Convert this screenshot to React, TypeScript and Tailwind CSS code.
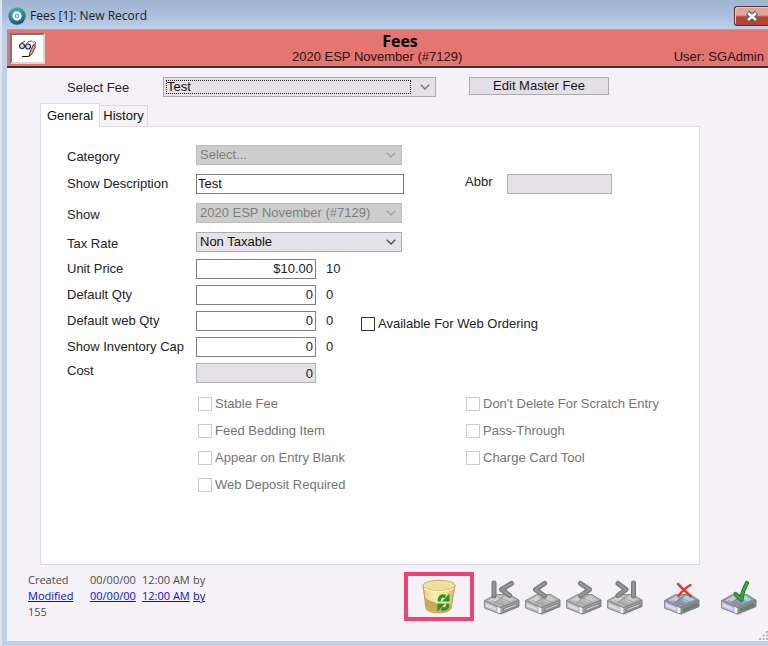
import type { ReactNode } from "react";

const sans = "font-['Liberation_Sans',Arial,sans-serif]";
const humanist = "font-['Open_Sans','Noto_Sans',sans-serif]";

function Chevron() {
  return (
    <svg
      viewBox="0 0 10 6"
      className="pointer-events-none absolute top-1/2 right-[6px] h-[6px] w-[10px] -translate-y-1/2"
      fill="none"
      stroke="currentColor"
      strokeWidth="1.5"
      aria-hidden="true"
    >
      <path d="M0.8 0.8 5 5 9.2 0.8" />
    </svg>
  );
}

function SelectBox({
  id,
  value,
  disabled = false,
  marked = false,
}: {
  id: string;
  value: string;
  disabled?: boolean;
  marked?: boolean;
}) {
  return (
    <div
      className={
        disabled
          ? "relative w-[206px] text-[#a3a3a3]"
          : marked
            ? "relative w-[273px] text-[#777]"
            : "relative w-[206px] text-[#555]"
      }
    >
      <select
        id={id}
        disabled={disabled}
        defaultValue={value}
        className={
          disabled
            ? "block h-5 w-full appearance-none border border-[#bdbdbd] bg-[#cdcdcd] pb-px pl-[3px] text-[13px] leading-4 text-[#7d7d7d] opacity-100 outline-none"
            : "block h-5 w-full appearance-none border border-[#acacb0] bg-[#e4e2e6] pb-px pl-[3px] text-[13px] leading-4 text-[#111] outline-none"
        }
      >
        <option>{value}</option>
      </select>
      {marked && (
        <span className="pointer-events-none absolute top-[3px] right-[25px] bottom-[3px] left-[3px] border border-dotted border-[#222]" />
      )}
      <Chevron />
    </div>
  );
}

function SelectRow({ id, label, value, disabled }: { id: string; label: string; value: string; disabled?: boolean }) {
  return (
    <div className="flex h-5 items-center">
      <label htmlFor={id} className="w-[129px] pt-[3px]">
        {label}
      </label>
      <SelectBox id={id} value={value} disabled={disabled} />
    </div>
  );
}

function NumberRow({
  id,
  label,
  value,
  raw,
  children,
}: {
  id: string;
  label: string;
  value: string;
  raw: string;
  children?: ReactNode;
}) {
  return (
    <div className="flex h-5 items-center">
      <label htmlFor={id} className="w-[129px]">
        {label}
      </label>
      <input
        id={id}
        defaultValue={value}
        className="h-5 w-[120px] border border-[#7f7f7f] bg-white pr-[2px] pb-px text-right outline-none"
      />
      <span className="w-[45px] pl-[10px]">{raw}</span>
      {children}
    </div>
  );
}

function Check({ label, enabled = false }: { label: string; enabled?: boolean }) {
  return (
    <label
      className={
        enabled
          ? "flex h-[14px] items-center gap-[3px] self-end whitespace-nowrap"
          : "flex h-[14px] items-center gap-[3px] whitespace-nowrap text-[#757575]"
      }
    >
      <input
        type="checkbox"
        disabled={!enabled}
        className={
          enabled
            ? "size-[14px] shrink-0 appearance-none border border-[#333] bg-white checked:bg-[#333]"
            : "size-[14px] shrink-0 appearance-none border border-[#ccc] bg-white"
        }
      />
      {label}
    </label>
  );
}

function Drive({ tinted = false, children }: { tinted?: boolean; children: ReactNode }) {
  return (
    <svg viewBox="0 0 36 36" className="size-9" fill="none" aria-hidden="true">
      <path d="M1 24 17 32 35 23v5L18 36 1 30Z" fill="#00000022" />
      <path d="M0.5 21.5 16 28.5V35L0.5 29Z" fill={tinted ? "#b9b9d6" : "#bcbcbc"} stroke="#7b7b7b" strokeWidth="0.8" />
      <path d="M2 24.5 12 29v2.500L2 27.500Z" fill={tinted ? "#dcdcf2" : "#dedede"} />
      <path d="M16 28.500 35 21v6.500L16 35Z" fill={tinted ? "#8b8d96" : "#9d9d9d"} stroke="#666" strokeWidth="0.8" />
      <path d="M13.500 27.500 16.500 28.700V34.600l-3-1.200Z" fill="#f4f4f6" />
      <path d="M19.500 29.800 33 24.500v2.200L19.500 32Z" fill={tinted ? "#4f9d51" : "#cfcfcf"} stroke="#6c6c6c" strokeWidth="0.7" />
      <path d="M0.500 21.500 11.500 15.500H26L35 21 16 28.500Z" fill={tinted ? "#9697ab" : "#b3b3b3"} stroke="#808080" strokeWidth="0.8" />
      <path d="M4.500 21.300 12.500 16.800H18L10 23.800Z" fill={tinted ? "#c9c9df" : "#d2d2d2"} />
      <path d="M19.500 16.800h5.500l5.500 4-7.500 2.500-5-2.300Z" fill={tinted ? "#9adbe8" : "#cacaca"} />
      <path d="M7 21.500 20 26M13 17.500 26 23M22 16.500 10 24" stroke={tinted ? "#777795" : "#8f8f8f"} strokeWidth="0.6" />
      {children}
    </svg>
  );
}

function Stroke({ d }: { d: string }) {
  return (
    <>
      <path d={d} stroke="#757575" strokeWidth="5" strokeLinecap="round" strokeLinejoin="round" />
      <path d={d} stroke="#8b8b8b" strokeWidth="3.400" strokeLinecap="round" strokeLinejoin="round" />
      <path d={d} stroke="#9b9b9b" strokeWidth="1.200" strokeLinecap="round" strokeLinejoin="round" />
    </>
  );
}

function Bin() {
  return (
    <svg viewBox="0 0 34 35" className="h-[35px] w-[34px]" fill="none" aria-hidden="true">
      <defs>
        <linearGradient id="binSide" x1="0" x2="1">
          <stop offset="0" stopColor="#e5cf7c" />
          <stop offset="0.35" stopColor="#f8edb8" />
          <stop offset="0.7" stopColor="#f0df98" />
          <stop offset="1" stopColor="#d8bd68" />
        </linearGradient>
      </defs>
      <path d="M1 6 4 29.500C6 35.300 27 35.300 29 29.500L33 6Z" fill="url(#binSide)" stroke="#b89e50" />
      <path d="M2.800 18.500C8 23 13 22 18 26c4 3 7 2 11.500-1.500l-.8 5C27 34.500 6.300 34.500 4.300 29Z" fill="#c9ab57" />
      <ellipse cx="17" cy="6.500" rx="16" ry="5.200" fill="#f3e3a0" stroke="#c8ae5b" />
      <ellipse cx="17" cy="7.200" rx="13.500" ry="3.800" fill="#f2df98" />
      <path d="M2.300 9C7 13.500 27 13.500 31.800 9" stroke="#fff4c5" strokeWidth="1.200" />
      <path d="M17.300 22.500C17 17.500 20 16 23.500 17.500" stroke="#22942a" strokeWidth="3.200" />
      <path d="M27.500 14.500v8h-7.500Z" fill="#22942a" />
      <path d="M25.700 24.500C26 29.500 23 31 19.500 29.500" stroke="#22942a" strokeWidth="3.200" />
      <path d="M15.500 32.500v-8h7.500Z" fill="#22942a" />
    </svg>
  );
}

function IconButton({ label, children }: { label: string; children: ReactNode }) {
  return (
    <button type="button" aria-label={label} className="block size-9">
      {children}
    </button>
  );
}

export default function App() {
  return (
    <div
      className={`flex min-h-screen flex-col border-l-2 border-[#dfe3ea] bg-[#bfd0ea] pb-[5px] pl-[5px] text-[13px] leading-4 text-[#22222a] ${sans}`}
    >
      <div className="-ml-[5px] flex h-[29px] items-center bg-linear-to-b from-[#9fb5d2] via-[#a9bedb] to-[#bdd0ec] pt-[3px] pl-[6px]">
        <svg viewBox="0 0 18 18" className="size-[18px]" fill="none" aria-hidden="true">
          <defs>
            <linearGradient id="appMark" x1="0" y1="0" x2="0.300" y2="1">
              <stop offset="0" stopColor="#4fb9ae" />
              <stop offset="1" stopColor="#1d5f7c" />
            </linearGradient>
          </defs>
          <circle cx="9" cy="9" r="8.700" fill="url(#appMark)" />
          <circle cx="9" cy="9" r="3.400" fill="#2f8d9a" stroke="#fff" strokeWidth="2.600" />
          <circle cx="9" cy="9" r="1.200" fill="#d8f0ef" />
        </svg>
        <h1 className={`ml-1 text-[12px] text-[#1c202a] ${humanist}`}>Fees [1]: New Record</h1>
        <button
          type="button"
          aria-label="Close"
          className="ml-auto flex h-5 w-[34px] items-center justify-center rounded-l-[3px] border border-r-0 border-[#553238] bg-linear-to-b from-[#dfa79c] from-45% to-[#b2452f] to-55% shadow-[inset_1px_1px_0_#efc9c2]"
        >
          <svg viewBox="0 0 14 11" className="h-[11px] w-[14px]" fill="none" aria-hidden="true">
            <path d="M2.500 1.500 11.500 9.500M11.500 1.500 2.500 9.500" stroke="#4e5262" strokeWidth="4.600" />
            <path d="M3 2 11 9M11 2 3 9" stroke="#fff" strokeWidth="2.600" />
          </svg>
        </button>
      </div>

      <header className="grid h-[39px] grid-cols-[1fr_190px_1fr] border-t border-b-2 border-t-[#cf8f98] border-b-[#4a2d30] bg-[#e57570] pr-1 pl-[3px] text-[#2a1214]">
        <button
          type="button"
          aria-label="Edit view"
          className="mt-[3px] flex h-[31px] w-[35px] items-center justify-center border-2 border-t-[#777] border-r-[#d8d8d8] border-b-[#d8d8d8] border-l-[#777] bg-white"
        >
          <svg viewBox="0 0 20 20" className="size-5" fill="none" aria-hidden="true">
            <circle cx="4" cy="7" r="2.500" fill="#d3dcf3" stroke="#222a4b" strokeWidth="1.200" />
            <circle cx="10" cy="7.500" r="2.500" fill="#d3dcf3" stroke="#222a4b" strokeWidth="1.200" />
            <path d="M3 4.500 7 2M8 5.500C10 2 13 1.500 14.500 2.500M15 3.500c1.500-1.500 3-.5 2.500 1.500" stroke="#444" />
            <path d="m15 6 2.500 2-4 7.500-2 1.500v-2.500Z" fill="#eaa06e" stroke="#4e2a18" strokeWidth="0.900" />
            <path d="m15 5.500 2.500 2 .8-1.800-1.800-1.500Z" fill="#c93ab0" />
            <path d="M4 17.500h6l2-1" stroke="#111" />
          </svg>
        </button>
        <div>
          <h2 className={`pt-[3px] pl-[26px] text-center text-[16px] leading-4 font-bold text-black ${humanist}`}>
            Fees
          </h2>
          <p className="whitespace-nowrap">2020 ESP November (#7129)</p>
        </div>
        <p className="self-end pb-px text-right">User: SGAdmin</p>
      </header>

      <main className="flex flex-1 flex-col bg-[#f4f2f6]">
        <div className="flex items-start pt-[9px] pl-[60px]">
          <label htmlFor="fee" className="w-24 pt-[3px]">
            Select Fee
          </label>
          <SelectBox id="fee" value="Test" marked />
          <button
            type="button"
            className="ml-[33px] h-[18px] w-[140px] border border-[#acacb0] bg-[#e2e0e4] leading-4 text-[#16161c]"
          >
            Edit Master Fee
          </button>
        </div>

        <div role="tablist" className="mt-[6px] flex items-end pl-[33px] text-[#111]">
          <button
            type="button"
            role="tab"
            aria-selected="true"
            className="relative z-10 -mb-px h-6 w-[60px] border border-b-0 border-[#dddbe0] bg-white"
          >
            General
          </button>
          <button
            type="button"
            role="tab"
            aria-selected="false"
            className="h-[21px] w-12 border border-b-0 border-l-0 border-[#dddbe0]"
          >
            History
          </button>
        </div>

        <section className="mr-[68px] ml-[33px] flex-1 border border-[#dddbe0] bg-[#fefefe] pt-[18px] pl-[26px]">
          <div className="flex flex-col gap-[9px]">
            <SelectRow id="category" label="Category" value="Select..." disabled />
            <div className="flex h-5">
              <label htmlFor="description" className="w-[129px] self-center">
                Show Description
              </label>
              <input
                id="description"
                defaultValue="Test"
                className="h-5 w-[208px] border border-[#7f7f7f] bg-white pb-px pl-px text-[#111] outline-none"
              />
              <label htmlFor="abbr" className="ml-[61px] w-[42px]">
                Abbr
              </label>
              <input id="abbr" disabled className="h-5 w-[105px] border border-[#b3b1b8] bg-[#e4e2e6]" />
            </div>
            <SelectRow id="show" label="Show" value="2020 ESP November (#7129)" disabled />
            <SelectRow id="tax" label="Tax Rate" value="Non Taxable" />
          </div>

          <div className="mt-[7px] flex flex-col gap-[6px]">
            <NumberRow id="price" label="Unit Price" value="$10.00" raw="10" />
            <NumberRow id="qty" label="Default Qty" value="0" raw="0" />
            <NumberRow id="webqty" label="Default web Qty" value="0" raw="0">
              <Check label="Available For Web Ordering" enabled />
            </NumberRow>
            <NumberRow id="cap" label="Show Inventory Cap" value="0" raw="0" />
            <div className="flex h-5">
              <label htmlFor="cost" className="w-[129px]">
                Cost
              </label>
              <input
                id="cost"
                disabled
                defaultValue="0"
                className="h-5 w-[120px] border border-[#b3b1b8] bg-[#e4e2e6] pr-[2px] text-right text-[#22222a]"
              />
            </div>
          </div>

          <div className="mt-[14px] grid grid-cols-[268px_1fr] gap-y-[13px] pl-[131px]">
            <Check label="Stable Fee" />
            <Check label="Don't Delete For Scratch Entry" />
            <Check label="Feed Bedding Item" />
            <Check label="Pass-Through" />
            <Check label="Appear on Entry Blank" />
            <Check label="Charge Card Tool" />
            <Check label="Web Deposit Required" />
          </div>
        </section>

        <footer className="flex h-[76px] items-start pt-[7px] pl-[21px]">
          <div className={`grid grid-cols-[62px_52px_51px_1fr] text-[11px] text-[#4a4a50] ${humanist}`}>
            <span>Created</span>
            <span>00/00/00</span>
            <span className="whitespace-nowrap">12:00 AM</span>
            <span>by</span>
            <a href="#modified" className="text-[#0a0af0] underline">Modified</a>
            <a href="#modified" className="text-[#0a0af0] underline">00/00/00</a>
            <a href="#modified" className="whitespace-nowrap text-[#0a0af0] underline">12:00 AM</a>
            <a href="#modified" className="text-[#0a0af0] underline">by</a>
            <span>155</span>
          </div>

          <button
            type="button"
            aria-label="Delete"
            className="ml-auto flex h-[49px] w-[70px] items-center justify-center border-4 border-[#ef426f]"
          >
            <Bin />
          </button>
          <div className="ml-[10px] flex gap-[5px] pt-[7px]">
            <IconButton label="First record">
              <Drive>
                <Stroke d="M10 4V17" />
                <Stroke d="M27.500 4.500 17.500 10.500 25.500 16.500" />
              </Drive>
            </IconButton>
            <IconButton label="Previous record">
              <Drive>
                <Stroke d="M19.500 4.500 10.500 10.500 19.500 17" />
              </Drive>
            </IconButton>
            <IconButton label="Next record">
              <Drive>
                <Stroke d="M14.500 4.500 23.500 10.500 14.500 17" />
              </Drive>
            </IconButton>
            <IconButton label="Last record">
              <Drive>
                <Stroke d="M11 4.500 19 10.500 11 16.500" />
                <Stroke d="M26.500 4V17" />
              </Drive>
            </IconButton>
          </div>
          <div className="ml-[21px] flex gap-[21px] pt-[7px] pr-[11px]">
            <IconButton label="Cancel">
              <Drive tinted>
                <path d="M14 5C18 9 22 13 27 17.500M26.500 6C21 9 18 12 14.500 17" stroke="#e23b2e" strokeWidth="2.500" strokeLinecap="round" />
              </Drive>
            </IconButton>
            <IconButton label="Save">
              <Drive tinted>
                <path d="M14.500 15 20.500 21C21 15 23 9 26 4" stroke="#1c7f22" strokeWidth="4.200" strokeLinecap="round" strokeLinejoin="round" />
                <path d="M14.500 15 20.500 21C21 15 23 9 26 4" stroke="#37a637" strokeWidth="2.400" strokeLinecap="round" strokeLinejoin="round" />
              </Drive>
            </IconButton>
          </div>
          <svg viewBox="0 0 9 9" className="-ml-[9px] mb-px size-[9px] self-end" fill="#b9b7bc" aria-hidden="true">
            <path d="M7 0h2v2H7ZM7 3.500h2v2H7ZM3.500 3.500h2v2h-2ZM7 7h2v2H7ZM3.500 7h2v2h-2ZM0 7h2v2H0Z" />
          </svg>
        </footer>
      </main>
    </div>
  );
}
